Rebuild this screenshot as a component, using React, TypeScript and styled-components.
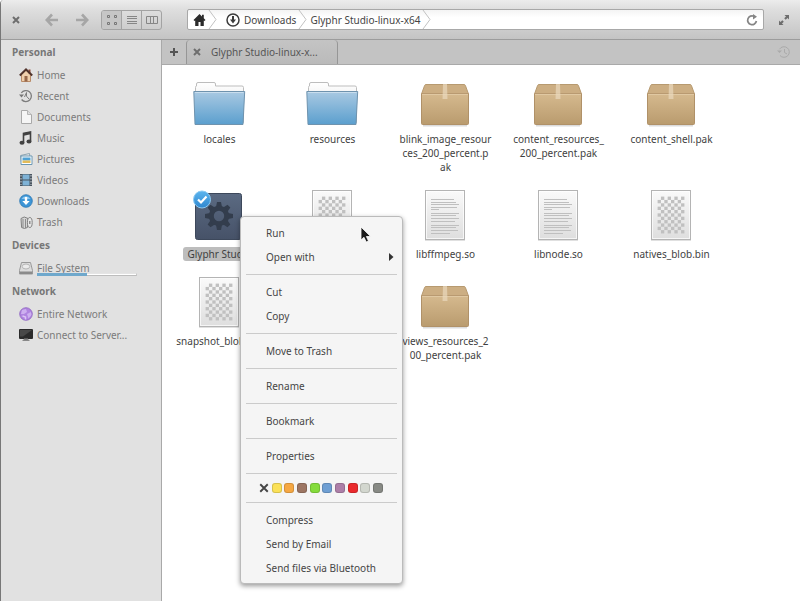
import React from "react";
import styled, { createGlobalStyle } from "styled-components";

const GlobalStyle = createGlobalStyle`
  * { box-sizing: border-box; }
  html, body, #root { height: 100%; }
  body {
    margin: 0;
    background: #fff;
    font-family: "Noto Sans", "Open Sans", sans-serif;
    font-size: 10px;
    line-height: 14px;
    color: #454545;
  }
  button {
    margin: 0;
    padding: 0;
    border: 0;
    background: none;
    font: inherit;
    color: inherit;
    text-align: left;
  }
  svg { display: block; flex: none; }
  a { color: inherit; text-decoration: none; }
  ul { margin: 0; padding: 0; list-style: none; }
`;

const Window = styled.div`
  position: relative;
  display: flex;
  flex-direction: column;
  min-height: 100%;
  border-left: 1px solid #777;
  border-top-left-radius: 4px;
  overflow: hidden;
`;

const Toolbar = styled.header`
  display: flex;
  align-items: center;
  height: 40px;
  padding: 0 8px 0 7px;
  background: linear-gradient(#ececec, #dedede 25%, #c4c4c4);
  border-bottom: 1px solid #9c9c9c;
`;

const ToolButton = styled.button<{ $width: number }>`
  display: flex;
  align-items: center;
  justify-content: center;
  width: ${(p) => p.$width}px;
  height: 24px;
  color: #6e6e6e;
  &:disabled { color: #a6a6a6; }
`;

const History = styled.div`
  display: flex;
  margin: 0 4px 0 13px;
`;

const ViewSwitch = styled.div`
  display: flex;
  height: 20px;
  margin-right: 25px;
  border: 1px solid #a3a3a3;
  border-radius: 3px;
  overflow: hidden;
`;

const ViewButton = styled.button<{ $active?: boolean }>`
  display: flex;
  align-items: center;
  justify-content: center;
  width: 20px;
  color: #868686;
  background: ${(p) => (p.$active ? "#c6c6c6" : "transparent")};
  & + & { border-left: 1px solid #a3a3a3; }
  &:first-child { width: 19px; }
`;

const PathBar = styled.nav`
  display: flex;
  flex: 1;
  align-items: center;
  height: 21px;
  padding: 0 5px;
  border: 1px solid #a8a8a8;
  border-radius: 2px;
  background: linear-gradient(#f4f4f4, #fff 40%);
`;

const Crumb = styled.a`
  display: flex;
  align-items: center;
  gap: 2px;
  height: 19px;
`;

const Reload = styled.button`
  margin-left: auto;
`;

const Body = styled.div`
  display: flex;
  flex: 1;
`;

const Sidebar = styled.aside`
  width: 161px;
  flex: none;
  background: #e1e1e1;
  border-right: 1px solid #a9a9a9;
  color: #7b7b7b;
`;

const SideSection = styled.section`
  padding-bottom: 1px;
`;

const SideHeading = styled.h2`
  margin: 0;
  padding-left: 11px;
  font-size: 10px;
  font-weight: 700;
  line-height: 24px;
  color: #777;
`;

const Place = styled.a`
  position: relative;
  display: flex;
  align-items: center;
  gap: 4px;
  height: 21px;
  padding-left: 18px;
`;

const Usage = styled.span`
  position: absolute;
  left: 36px;
  bottom: 2px;
  width: 100px;
  height: 3px;
  border: 1px solid;
  border-color: #e4e4e4 #c8c8c8 #bdbdbd;
  background: #fff;
  &::before {
    content: "";
    position: absolute;
    inset: -1px 50% -1px -1px;
    background: #6fa8cc;
  }
`;

const Main = styled.main`
  flex: 1;
  min-width: 0;
  background: #fff;
`;

const TabBar = styled.div`
  display: flex;
  height: 25px;
  background: #c3c3c3;
  border-bottom: 1px solid #a9a9a9;
`;

const NewTab = styled.button`
  display: flex;
  align-items: center;
  justify-content: center;
  width: 24px;
  color: #555;
`;

const Tab = styled.div`
  display: flex;
  align-items: center;
  gap: 10px;
  width: 152px;
  padding-left: 6px;
  border: 1px solid #969696;
  border-width: 0 1px;
  border-radius: 4px 4px 0 0;
  background: linear-gradient(#c4c4c4, #bababa);
  color: #555;
`;

const RestoreTab = styled.button`
  margin: 0 9px 0 auto;
  color: #aaa;
`;

const Files = styled.ul`
  display: grid;
  grid-template-columns: repeat(auto-fill, 113px);
  row-gap: 16px;
  padding: 10px 0 10px 1px;
`;

const FileCell = styled.li`
  display: flex;
  flex-direction: column;
  align-items: center;
  gap: 5px;
`;

const FileName = styled.span<{ $selected?: boolean }>`
  padding: 0 4px;
  border-radius: 3px;
  text-align: center;
  white-space: pre;
  color: #3f3f3f;
  background: ${(p) => (p.$selected ? "#bdbdbd" : "transparent")};
`;

const Menu = styled.div`
  position: absolute;
  left: 239px;
  top: 216px;
  width: 163px;
  padding: 4px 0 3px;
  border: 1px solid #bbb;
  border-radius: 4px;
  background: #f5f5f5;
  box-shadow: 0 2px 5px rgba(0, 0, 0, 0.4);
`;

const MenuItem = styled.button`
  display: flex;
  align-items: center;
  justify-content: space-between;
  width: 100%;
  height: 24px;
  padding: 0 8px 0 25px;
`;

const Divider = styled.hr`
  height: 1px;
  margin: 5px;
  border: 0;
  background: #cbcbcb;
`;

const Swatches = styled.div`
  display: flex;
  align-items: center;
  justify-content: space-between;
  height: 18px;
  padding: 0 19px 0 18px;
`;

const ClearColor = styled.button`
  display: flex;
`;

const Swatch = styled.button<{ $color: string }>`
  width: 10px;
  height: 10px;
  border: 1px solid rgba(0, 0, 0, 0.14);
  border-radius: 3px;
  background: ${(p) => p.$color};
`;

const Pointer = styled.svg`
  position: absolute;
  left: 359px;
  top: 226px;
`;

const Cross = ({ size = 8, width = 2 }: { size?: number; width?: number }) => (
  <svg width={size} height={size} viewBox="0 0 8 8" stroke="currentColor" strokeWidth={width}>
    <path d="M1 1l6 6M7 1L1 7" />
  </svg>
);

const Arrow = ({ flip }: { flip?: boolean }) => (
  <svg width="14" height="14" viewBox="0 0 14 14" fill="none" stroke="currentColor" strokeWidth="2.6">
    <path d={flip ? "M1 7h11M7 1.5L12.2 7 7 12.5" : "M13 7H2M7 1.5L1.8 7 7 12.5"} />
  </svg>
);

const Chevron = () => (
  <svg width="14" height="19" viewBox="0 0 14 19" fill="none" stroke="#c2c2c2">
    <path d="M3 0l7 9.5L3 19" />
  </svg>
);

const FolderIcon = () => (
  <svg width="53" height="52" viewBox="0 0 53 52">
    <defs>
      <linearGradient id="folder" x1="0" y1="0" x2="0" y2="1">
        <stop offset="0" stopColor="#a9c9e2" />
        <stop offset="1" stopColor="#5b9fce" />
      </linearGradient>
      <linearGradient id="folderBack" x1="0" y1="0" x2="0" y2="1">
        <stop offset="0" stopColor="#fff" />
        <stop offset="1" stopColor="#dcdcdc" />
      </linearGradient>
    </defs>
    <path d="M2.500 48V12.500q0-1.500 1-1.500V9q0-1.500 1.500-1.500H21q1.500 0 1.500 1.500v2H49q1.500 0 1.500 1.500v35z" fill="url(#folderBack)" stroke="#bdbdbd" />
    <path d="M.8 16.500h50.900L50 49.500H2z" fill="url(#folder)" stroke="#6f93ae" />
    <path d="M2 17.500h48.500" stroke="#c9deee" />
  </svg>
);

const BoxIcon = () => (
  <svg width="53" height="52" viewBox="0 0 53 52">
    <defs>
      <linearGradient id="box" x1="0" y1="0" x2="0" y2="1">
        <stop offset="0" stopColor="#d5b98e" />
        <stop offset="1" stopColor="#b99b6e" />
      </linearGradient>
    </defs>
    <path d="M4 50.500h44" stroke="#000" strokeOpacity=".14" strokeWidth="2" />
    <path d="M7 9.500h38q1 0 1.400 1l3.100 8.500h-47L5.600 10.500q.4-1 1.400-1z" fill="#ccae83" stroke="#b79a70" />
    <path d="M2.500 19h47v29.500q0 1-1 1h-45q-1 0-1-1z" fill="url(#box)" stroke="#b09168" />
    <path d="M3 19.500h46" stroke="#e0c8a2" />
    <path d="M24 9h4l.5 15h-5z" fill="#ead8bd" fillOpacity=".7" />
  </svg>
);

const Page = ({ children }: { children: React.ReactNode }) => (
  <svg width="53" height="52" viewBox="0 0 53 52">
    <defs>
      <linearGradient id="page" x1="0" y1="0" x2="0" y2="1">
        <stop offset="0" stopColor="#fafafa" />
        <stop offset="1" stopColor="#dedede" />
      </linearGradient>
    </defs>
    <path d="M6 50.500h40" stroke="#000" strokeOpacity=".12" strokeWidth="1" />
    <rect x="6.500" y=".5" width="39" height="49" fill="url(#page)" stroke="#b4b4b4" />
    <rect x="7.500" y="1.500" width="37" height="47" fill="none" stroke="#fff" strokeOpacity=".7" />
    {children}
  </svg>
);

const BinaryIcon = () => {
  const cells: React.ReactNode[] = [];
  for (let row = 0; row < 11; row++) {
    for (let col = 0; col < 8; col++) {
      if ((row + col) % 2 === 1) {
        cells.push(
          <rect key={`${row}-${col}`} x={12.6 + col * 3.35} y={6.6 + row * 3.35} width="3.35" height="3.35" fill="#c0c0c0" />
        );
      }
    }
  }
  return <Page>{cells}</Page>;
};

const textLines: [number, number][] = [
  [9, 23], [12, 25], [14, 28], [17, 26], [19, 8],
  [23, 28], [25, 25], [28, 28], [31, 24],
  [35, 28], [37, 25], [40, 27], [43, 19],
];

const TextIcon = () => (
  <Page>
    {textLines.map(([y, w]) => (
      <path key={y} d={`M12 ${y + 0.5}h${w}`} stroke="#bfbfbf" />
    ))}
  </Page>
);

const ExecIcon = () => (
  <svg width="53" height="52" viewBox="0 0 53 52">
    <defs>
      <linearGradient id="exec" x1="0" y1="0" x2="0" y2="1">
        <stop offset="0" stopColor="#5b6a82" />
        <stop offset="1" stopColor="#465268" />
      </linearGradient>
      <linearGradient id="check" x1="0" y1="0" x2="0" y2="1">
        <stop offset="0" stopColor="#5cb5ee" />
        <stop offset="1" stopColor="#2f87d0" />
      </linearGradient>
    </defs>
    <rect x="2.500" y="3.500" width="46" height="46" rx="2" fill="url(#exec)" stroke="#3d485b" />
    <g transform="translate(26 26)" fill="#333d4d">
      {[0, 45, 90, 135, 180, 225, 270, 315].map((a) => (
        <path key={a} d="M-3-9l1-5h4l1 5z" transform={`rotate(${a})`} />
      ))}
      <circle r="7.700" fill="none" stroke="#333d4d" strokeWidth="5" />
    </g>
    <circle cx="9" cy="9.500" r="8.500" fill="url(#check)" stroke="#8ccaf2" />
    <path d="M5 9.500l3 3 5.500-6" fill="none" stroke="#fff" strokeWidth="2.200" />
  </svg>
);

const Icon14 = ({ children }: { children: React.ReactNode }) => (
  <svg width="14" height="16" viewBox="0 0 14 16" fill="none">{children}</svg>
);

const placeIcons: Record<string, React.ReactNode> = {
  Home: (
    <Icon14>
      <path d="M2.500 7v7.500h9V7L7 3z" fill="#efcfac" stroke="#b98b68" />
      <path d="M9.500 2.500h2v4h-2z" fill="#8c4a38" />
      <path d="M.8 8.500L7 2.500l6.200 6" stroke="#50332c" strokeWidth="2" />
      <path d="M5.500 9h3v5.500h-3z" fill="#96674a" />
    </Icon14>
  ),
  Recent: (
    <Icon14>
      <path d="M2.300 5A5.500 5.500 0 1 1 2.600 11.500" stroke="#7d7d7d" strokeWidth="1.300" />
      <path d="M0 6.500h5L2.500 9.500z" fill="#777" />
      <path d="M7.500 4.500v3.700l2.500 2.800M5.500 9l2-4.500" stroke="#7d7d7d" />
    </Icon14>
  ),
  Documents: (
    <Icon14>
      <path d="M2.500 1.500h6l4 4v9h-10z" fill="#f5f5f5" stroke="#a9a9a9" />
      <path d="M8.500 1.500v4h4" fill="#ddd" stroke="#b5b5b5" />
    </Icon14>
  ),
  Music: (
    <Icon14>
      <path d="M4.500 12.500v-9l7-1.500v9" stroke="#424242" strokeWidth="1.600" />
      <path d="M4.500 4.500l7-1.500" stroke="#424242" strokeWidth="2.600" />
      <ellipse cx="3" cy="12.800" rx="2.500" ry="2" fill="#424242" />
      <ellipse cx="10" cy="11.400" rx="2.500" ry="2" fill="#424242" />
    </Icon14>
  ),
  Pictures: (
    <Icon14>
      <path d="M1.500 4.500l9-2 1 8-9 1z" fill="#eaeaea" stroke="#8ba3b0" />
      <path d="M2 5h11v8.500H2z" fill="#fff" stroke="#6b97b3" />
      <path d="M3.500 6.500h8v3h-8z" fill="#4ea1d4" />
      <path d="M3.500 9.500h8v2.500h-8z" fill="#e3bb58" />
    </Icon14>
  ),
  Videos: (
    <Icon14>
      <path d="M1 2h12v12H1z" fill="#49545f" />
      <path d="M3.500 2.500h7v5h-7zM3.500 8.500h7v5h-7z" fill="#7eb2d6" />
      <path d="M2 3v10M12 3v10" stroke="#ccd2d8" strokeDasharray="1.500 1.500" />
    </Icon14>
  ),
  Downloads: (
    <Icon14>
      <circle cx="7" cy="8" r="6.300" fill="#3d95d6" stroke="#2c77b3" strokeWidth=".8" />
      <path d="M2.500 6a5 5 0 0 1 9 0z" fill="#87c5ef" />
      <path d="M5.800 4h2.400v4h2.500L7 12 3.300 8h2.500z" fill="#fff" />
    </Icon14>
  ),
  Trash: (
    <Icon14>
      <path d="M2 4.500q3-3 7 0l-.6 9q-3 2-5.800 0z" fill="#d5d5d5" stroke="#808080" />
      <path d="M4 5v9M6.500 5v9" stroke="#8b8b8b" />
      <ellipse cx="10.800" cy="8.500" rx="2.400" ry="5" fill="#e6e6e6" stroke="#808080" />
      <path d="M10 7h1.500v3H10z" fill="#909090" />
    </Icon14>
  ),
  "File System": (
    <Icon14>
      <path d="M2.500 2.500h9l2 8v3.500H.5v-3.500z" fill="#dcdcdc" stroke="#999" />
      <path d="M1 11.500h12v2.500H1z" fill="#8b8b8b" />
      <ellipse cx="7" cy="6.500" rx="3.800" ry="2.500" stroke="#b5b5b5" fill="#ebebeb" />
    </Icon14>
  ),
  "Entire Network": (
    <Icon14>
      <circle cx="7" cy="8" r="6.300" fill="#b084e0" stroke="#8c62bf" strokeWidth=".8" />
      <path d="M3 4l4-1 1 3-3 2-3 0zM8 8l4-2 .5 3-3 3.500z" fill="#cdb0f0" />
      <path d="M3.500 10l3 1v2.500" stroke="#dcc5f5" strokeWidth="1.500" />
    </Icon14>
  ),
  "Connect to Server...": (
    <Icon14>
      <rect x="0" y="2" width="14" height="10" rx="1" fill="#2b2b2b" />
      <path d="M1 3h12L4 9.500H1z" fill="#484848" />
      <path d="M5 12h4v1.500H5zM3.500 13.500h7" fill="#777" stroke="#888" />
    </Icon14>
  ),
};

const sections = [
  { title: "Personal", places: ["Home", "Recent", "Documents", "Music", "Pictures", "Videos", "Downloads", "Trash"] },
  { title: "Devices", places: ["File System"] },
  { title: "Network", places: ["Entire Network", "Connect to Server..."] },
];

type Kind = "folder" | "box" | "exec" | "binary" | "text";

const fileIcons: Record<Kind, () => React.ReactElement> = {
  folder: FolderIcon,
  box: BoxIcon,
  exec: ExecIcon,
  binary: BinaryIcon,
  text: TextIcon,
};

const files: { name: string; kind: Kind; selected?: boolean }[] = [
  { name: "locales", kind: "folder" },
  { name: "resources", kind: "folder" },
  { name: "blink_image_resour\nces_200_percent.p\nak", kind: "box" },
  { name: "content_resources_\n200_percent.pak", kind: "box" },
  { name: "content_shell.pak", kind: "box" },
  { name: "Glyphr Studio", kind: "exec", selected: true },
  { name: "icudtl.dat", kind: "binary" },
  { name: "libffmpeg.so", kind: "text" },
  { name: "libnode.so", kind: "text" },
  { name: "natives_blob.bin", kind: "binary" },
  { name: "snapshot_blob.bin", kind: "binary" },
  { name: "ui_resources_200\n_percent.pak", kind: "box" },
  { name: "views_resources_2\n00_percent.pak", kind: "box" },
];

const menuTop = [["Run", "Open with"], ["Cut", "Copy"], ["Move to Trash"], ["Rename"], ["Bookmark"], ["Properties"]];
const menuBottom = ["Compress", "Send by Email", "Send files via Bluetooth"];

const colors: [string, string][] = [
  ["Yellow", "#fbe158"], ["Orange", "#f6a843"], ["Brown", "#9d7663"], ["Green", "#85dc3c"], ["Blue", "#6f9fd3"],
  ["Purple", "#ad7fa8"], ["Red", "#ea2a2d"], ["Light gray", "#d3d7cf"], ["Gray", "#888a85"],
];

export default function App() {
  return (
    <Window>
      <GlobalStyle />
      <Toolbar>
        <ToolButton $width={16} aria-label="Close window"><Cross /></ToolButton>
        <History>
          <ToolButton $width={30} aria-label="Back" disabled><Arrow /></ToolButton>
          <ToolButton $width={30} aria-label="Forward" disabled><Arrow flip /></ToolButton>
        </History>
        <ViewSwitch>
          <ViewButton $active aria-label="Icon view">
            <svg width="12" height="12" viewBox="0 0 12 12" fill="none" stroke="#777">
              <path d="M1.500 1.500h2v2h-2zM8.500 1.500h2v2h-2zM1.500 8.500h2v2h-2zM8.500 8.500h2v2h-2z" />
            </svg>
          </ViewButton>
          <ViewButton aria-label="List view">
            <svg width="10" height="10" viewBox="0 0 10 10" stroke="currentColor">
              <path d="M0 1.500h10M0 3.500h10M0 6.500h10M0 8.500h10" />
            </svg>
          </ViewButton>
          <ViewButton aria-label="Column view">
            <svg width="12" height="10" viewBox="0 0 12 10" fill="none" stroke="currentColor">
              <path d="M.5 1.500h11v7H.5zM4.500 1.500v7M7.500 1.500v7" />
            </svg>
          </ViewButton>
        </ViewSwitch>
        <PathBar aria-label="Location">
          <Crumb href="#home" aria-label="Home">
            <svg width="13" height="12" viewBox="0 0 13 12" fill="#2b2b2b">
              <path d="M6.500 0L.5 6l1 1 .7-.5V12h3.300V8h2v4h3.300V6.500L11.500 7l1-1-1.700-1.700V.8H9v1.700z" />
            </svg>
          </Crumb>
          <Chevron />
          <Crumb href="#downloads">
            <svg width="22" height="14" viewBox="0 0 22 14" fill="none" stroke="#3c3c3c">
              <circle cx="13" cy="7" r="6" strokeWidth="1.500" />
              <path d="M13 3v4" strokeWidth="2" />
              <path d="M10 6.500h6L13 10.500z" fill="#3c3c3c" stroke="none" />
            </svg>
            Downloads
          </Crumb>
          <Chevron />
          <Crumb href="#glyphr">Glyphr Studio-linux-x64</Crumb>
          <Chevron />
          <Reload aria-label="Reload">
            <svg width="12" height="12" viewBox="0 0 12 12" fill="none" stroke="#858585" strokeWidth="1.700">
              <path d="M8 2.300A4.400 4.400 0 1 0 10.400 7" />
              <path d="M7 0l4 2.800L7 5.500z" fill="#858585" stroke="none" />
            </svg>
          </Reload>
        </PathBar>
        <ToolButton $width={28} aria-label="Maximize">
          <svg width="24" height="12" viewBox="0 0 24 12" fill="currentColor">
            <path d="M18.500 1H23v4.500L21.500 4l-1.800 1.800-1.500-1.500L20 2.500zM17.500 11H13V6.500L14.500 8l1.800-1.800 1.500 1.500L16 9.500z" />
          </svg>
        </ToolButton>
      </Toolbar>
      <Body>
        <Sidebar>
          {sections.map((section) => (
            <SideSection key={section.title}>
              <SideHeading>{section.title}</SideHeading>
              {section.places.map((name) => (
                <Place key={name} href="#place">
                  {placeIcons[name]}
                  {name}
                  {name === "File System" && <Usage />}
                </Place>
              ))}
            </SideSection>
          ))}
        </Sidebar>
        <Main>
          <TabBar>
            <NewTab aria-label="New tab">
              <svg width="10" height="10" viewBox="0 0 10 10" stroke="currentColor" strokeWidth="2">
                <path d="M5 1v8M1 5h8" />
              </svg>
            </NewTab>
            <Tab>
              <ToolButton $width={8} aria-label="Close tab"><Cross /></ToolButton>
              Glyphr Studio-linux-x...
            </Tab>
            <RestoreTab aria-label="Closed tabs">
              <svg width="14" height="14" viewBox="0 0 14 14" fill="none" stroke="currentColor">
                <path d="M2.500 4.200A5.300 5.300 0 1 1 3 10.500" />
                <path d="M0 5.500h5L2.500 8z" fill="currentColor" stroke="none" />
                <path d="M7.500 4v3.500L10 9" />
              </svg>
            </RestoreTab>
          </TabBar>
          <Files>
            {files.map(({ name, kind, selected }) => {
              const Icon = fileIcons[kind];
              return (
                <FileCell key={name}>
                  <Icon />
                  <FileName $selected={selected}>{name}</FileName>
                </FileCell>
              );
            })}
          </Files>
        </Main>
      </Body>
      <Menu role="menu">
        {menuTop.map((group) => (
          <React.Fragment key={group[0]}>
            {group.map((label) => (
              <MenuItem key={label} role="menuitem">
                {label}
                {label === "Open with" && (
                  <svg width="5" height="8" viewBox="0 0 5 8" fill="#333"><path d="M0 0l4.500 4L0 8z" /></svg>
                )}
              </MenuItem>
            ))}
            <Divider />
          </React.Fragment>
        ))}
        <Swatches>
          <ClearColor aria-label="No color"><Cross size={10} width={1.5} /></ClearColor>
          {colors.map(([name, color]) => (
            <Swatch key={name} $color={color} aria-label={name} />
          ))}
        </Swatches>
        <Divider />
        {menuBottom.map((label) => (
          <MenuItem key={label} role="menuitem">{label}</MenuItem>
        ))}
      </Menu>
      <Pointer width="12" height="18" viewBox="0 0 12 18">
        <path d="M1 1v13l3-2.700L6.200 16l2.300-1L6.400 10.500h4.200z" fill="#1c1c1c" stroke="#fff" strokeWidth=".8" />
      </Pointer>
    </Window>
  );
}
